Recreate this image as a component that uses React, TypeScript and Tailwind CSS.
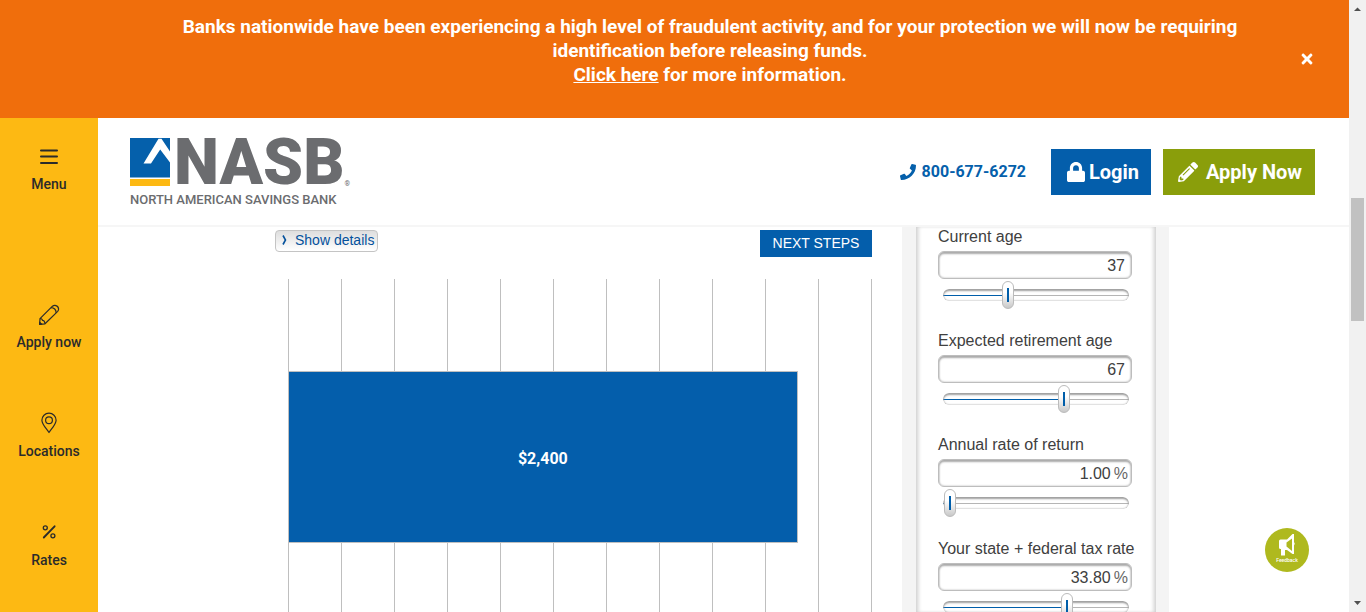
import type { CSSProperties, ReactNode } from "react";
import { FaLock, FaPencilAlt, FaPhone, FaTimes } from "react-icons/fa";

function MenuIcon() {
  return (
    <svg viewBox="0 0 24 24" className="size-6" fill="none" stroke="currentColor" strokeWidth="2" strokeLinecap="round">
      <path d="M4 5.500h16M4 11.500h16M4 18h16" />
    </svg>
  );
}

function PencilIcon() {
  return (
    <svg viewBox="0 0 24 24" className="size-6" fill="none" stroke="currentColor" strokeWidth="1.200" strokeLinejoin="round">
      <path d="M3 15.700 15.500 3.200a3.300 3.300 0 0 1 2.600-.9 4 4 0 0 1 3.500 3.600 3.300 3.300 0 0 1-.9 2.500L8 20.800 2.600 21.300Z" />
      <path d="M14 4.700c2.900.1 5 2.300 5.200 5.200M3 15.700c1.300-.3 2.300.3 2.400 1.600 1.500-.1 2.400 1 2.500 3.400" />
      <path d="m2.600 21.300.2-2 1.800 1.800Z" fill="currentColor" />
    </svg>
  );
}

function PinIcon() {
  return (
    <svg viewBox="0 0 24 24" className="size-6" fill="none" stroke="currentColor" strokeWidth="1.200" strokeLinejoin="round">
      <path d="M12 20.500C9.800 17 4.900 12.600 4.900 8.300a7.100 7.100 0 0 1 14.200 0c0 4.300-4.900 8.700-7.100 12.200Z" />
      <circle cx="12" cy="8.300" r="3.400" />
    </svg>
  );
}

function PercentIcon() {
  return (
    <svg viewBox="0 0 24 24" className="size-6" fill="none" stroke="currentColor" strokeWidth="1.300" strokeLinecap="round">
      <path d="M6.800 16.500 17.600 5.300" strokeWidth="1.900" />
      <circle cx="8.300" cy="6.800" r="2" />
      <circle cx="15.900" cy="14.800" r="2" />
    </svg>
  );
}

function SideLink({ icon, label }: { icon: ReactNode; label: string }) {
  return (
    <a href="#" className="flex flex-col items-center gap-[5px]">
      {icon}
      <span className="text-sm leading-5 font-medium">{label}</span>
    </a>
  );
}

function Logo() {
  return (
    <a href="#" className="flex flex-col pt-1 text-[#6b6c6f]">
      <span className="flex items-start gap-1">
        <svg viewBox="0 0 40 48" className="h-12 w-10">
          <path d="M0 0h40v39.500H0Z" fill="#0560ab" />
          <path d="M0 41h40v7H0Z" fill="#fdb913" />
          <path d="M13.500 25.500 28.500.8h3L40 13.500V24.500L30.200 11.500 21 25.500Z" fill="#fff" />
        </svg>
        <span className="flex items-end font-[Roboto,sans-serif] text-[64px] leading-[50px] font-black">
          NASB<span className="text-[7px] leading-2 font-normal">®</span>
        </span>
      </span>
      <span className="mt-[2px] font-[Roboto,sans-serif] text-[13px] leading-5 font-medium">NORTH AMERICAN SAVINGS BANK</span>
    </a>
  );
}

function Field({ id, label, value, amount, max, percent }: { id: string; label: string; value: string; amount: number; max: number; percent?: boolean }) {
  const fill = { "--fill": `${(amount / max) * 100}%` } as CSSProperties;
  return (
    <div className="flex flex-col pb-[22px]">
      <label htmlFor={id} className="text-base leading-5 whitespace-nowrap">{label}</label>
      <div className="mt-1 flex h-7 items-center rounded-md border border-[#bdbdbd] bg-white pt-px pr-[3px] pl-1 shadow-[inset_0_2px_2px_#aaaaaa,inset_0_0_2px_#aaaaaa]">
        <input id={id} defaultValue={value} className="min-w-0 flex-1 bg-transparent pr-[3px] text-right outline-none" />
        {percent && <span className="text-[#666666]">%</span>}
      </div>
      <input
        type="range"
        aria-label={label}
        min={0}
        max={max}
        step={0.1}
        defaultValue={amount}
        style={fill}
        className="mt-[2px] mr-[3px] ml-[5px] h-7 appearance-none bg-transparent [&::-webkit-slider-runnable-track]:h-3 [&::-webkit-slider-runnable-track]:rounded-md [&::-webkit-slider-runnable-track]:bg-[linear-gradient(#005eaa,#005eaa),linear-gradient(#b5b5b5,#b5b5b5)] [&::-webkit-slider-runnable-track]:bg-[position:left_center,left_center] [&::-webkit-slider-runnable-track]:bg-no-repeat [&::-webkit-slider-runnable-track]:[background-size:var(--fill)_1px,100%_1px] [&::-webkit-slider-runnable-track]:shadow-[inset_0_2px_2px_#a0a0a0,inset_0_0_2px_#909090] [&::-webkit-slider-thumb]:-mt-2 [&::-webkit-slider-thumb]:h-7 [&::-webkit-slider-thumb]:w-3 [&::-webkit-slider-thumb]:appearance-none [&::-webkit-slider-thumb]:rounded-md [&::-webkit-slider-thumb]:border [&::-webkit-slider-thumb]:border-[#bbbbbb] [&::-webkit-slider-thumb]:bg-[linear-gradient(#005eaa,#005eaa),linear-gradient(#ffffff_40%,#c8c8c8)] [&::-webkit-slider-thumb]:bg-center [&::-webkit-slider-thumb]:bg-no-repeat [&::-webkit-slider-thumb]:[background-size:2px_14px,100%_100%]"
      />
    </div>
  );
}

function Chart() {
  const amount = 2400;
  const step = 250;
  const columns = Array.from({ length: 11 }, (_, i) => i);
  return (
    <div className="mt-[22px] ml-[13px] grid flex-1">
      <div className="col-start-1 row-start-1 flex border-r border-[#bfbfbf]">
        {columns.map((i) => (
          <div key={i} className="flex-1 border-l border-[#bfbfbf]" />
        ))}
      </div>
      <div className="col-start-1 row-start-1 pt-[92px]">
        <div
          className="flex h-[172px] items-center justify-center border border-[#bfbfbf] bg-[#045eab] pt-1 font-[Roboto,sans-serif] text-base font-bold text-white"
          style={{ width: `${(amount / (step * columns.length)) * 100}%` }}
        >
          $2,400
        </div>
      </div>
    </div>
  );
}

function ScrollBar() {
  return (
    <div className="flex w-[17px] shrink-0 flex-col items-center bg-[#f1f1f1]">
      <svg viewBox="0 0 17 17" className="size-[17px]">
        <path d="M5 11h7L8.500 7.500Z" fill="#505050" />
      </svg>
      <div className="mt-[181px] h-[123px] w-[13px] bg-[#c1c1c1]" />
      <svg viewBox="0 0 17 17" className="mt-auto size-[17px]">
        <path d="M5 6h7L8.500 10Z" fill="#505050" />
      </svg>
    </div>
  );
}

export default function App() {
  return (
    <div className="flex h-screen overflow-hidden bg-white">
      <div className="flex min-w-0 flex-1 flex-col font-[Roboto,sans-serif]">
        <div className="flex h-[118px] shrink-0 items-center bg-[#f06e0c] pr-[34px] pl-[121px] text-white">
          <p className="mb-4 flex-1 text-center text-[19px] leading-6 font-bold">
            Banks nationwide have been experiencing a high level of fraudulent activity, and for your protection we will now be requiring
            <br />
            identification before releasing funds.
            <br />
            <a href="#" className="underline">Click here</a> for more information.
          </p>
          <button aria-label="Close" className="text-base">
            <FaTimes />
          </button>
        </div>
        <div className="flex min-h-0 flex-1">
          <nav className="flex w-[98px] shrink-0 flex-col bg-[#fdb913] pt-[27px] text-[#2b2b2b]">
            <SideLink icon={<MenuIcon />} label="Menu" />
            <div className="mt-[109px] flex flex-col gap-[60px]">
              <SideLink icon={<PencilIcon />} label="Apply now" />
              <SideLink icon={<PinIcon />} label="Locations" />
              <SideLink icon={<PercentIcon />} label="Rates" />
            </div>
          </nav>
          <div className="flex min-w-0 flex-1 flex-col">
            <header className="flex h-[109px] shrink-0 items-center border-b-2 border-[#f6f6f6] pr-[34px] pl-8">
              <Logo />
              <a href="#" className="ml-auto flex items-center gap-[6px] text-base font-bold text-[#0560ab]">
                <FaPhone className="size-4" />
                800-677-6272
              </a>
              <button className="ml-[25px] flex h-[46px] w-[100px] items-center justify-center gap-1 bg-[#045eab] pl-1 text-xl font-bold text-white">
                <FaLock className="h-5 w-[18px]" preserveAspectRatio="none" />
                Login
              </button>
              <button className="ml-3 flex h-[46px] w-[152px] items-center justify-center gap-2 bg-[#8a9e0b] pl-[2px] text-xl font-bold text-white">
                <FaPencilAlt className="size-5" />
                Apply Now
              </button>
            </header>
            <main className="flex min-h-0 flex-1 justify-center gap-[30px] pr-[3px] font-['Liberation_Sans',Arial,sans-serif] text-[#404040]">
              <section className="flex w-[597px] flex-col pt-[3px]">
                <div className="flex items-start justify-between">
                  <button className="flex h-[22px] w-[103px] items-center gap-2 rounded-sm border border-[#c4c4c4] bg-linear-to-b from-[#dedede] to-white pb-[2px] pl-[6px] text-sm whitespace-nowrap text-[#04519c]">
                    <svg viewBox="0 0 5 10" className="h-[10px] w-[5px]" fill="none" stroke="currentColor" strokeWidth="1.600">
                      <path d="m1 .5 2.500 4.500L1 9.500" />
                    </svg>
                    Show details
                  </button>
                  <button className="h-[27px] w-28 bg-[#045eab] pb-[2px] text-sm text-white">NEXT STEPS</button>
                </div>
                <Chart />
              </section>
              <aside className="w-[267px] overflow-hidden bg-[#f4f4f4] pr-[13px] pl-[14px]">
                <div className="h-full bg-white pr-6 pl-[22px] shadow-[inset_4px_0_4px_-2px_#cccccc,inset_-4px_0_4px_-2px_#cccccc]">
                  <Field id="age" label="Current age" value="37" amount={37} max={110} />
                  <Field id="retirement" label="Expected retirement age" value="67" amount={67} max={101} />
                  <Field id="return" label="Annual rate of return" value="1.00" amount={1} max={200} percent />
                  <Field id="tax" label="Your state + federal tax rate" value="33.80" amount={33.8} max={50} percent />
                </div>
              </aside>
            </main>
          </div>
        </div>
      </div>
      <ScrollBar />
      <button className="fixed right-[57px] bottom-10 flex size-11 flex-col items-center rounded-full bg-[#afb91e] pt-[6px] font-[Roboto,sans-serif] text-white">
        <svg viewBox="0 0 18 22" className="h-[22px] w-[18px]">
          <path d="M1 7Q1 5.500 2.500 5.500H9L14.500 0H16V8q1.500 1.500 0 3.500V20H14.500L9 16H7v5.500H3V15H2.500Q1 15 1 13.500ZM8.500 8.500V12.500L14 17V4.500Z" fill="#fff" fillRule="evenodd" />
        </svg>
        <span className="text-[5px] leading-[9px] font-medium">Feedback</span>
      </button>
    </div>
  );
}
